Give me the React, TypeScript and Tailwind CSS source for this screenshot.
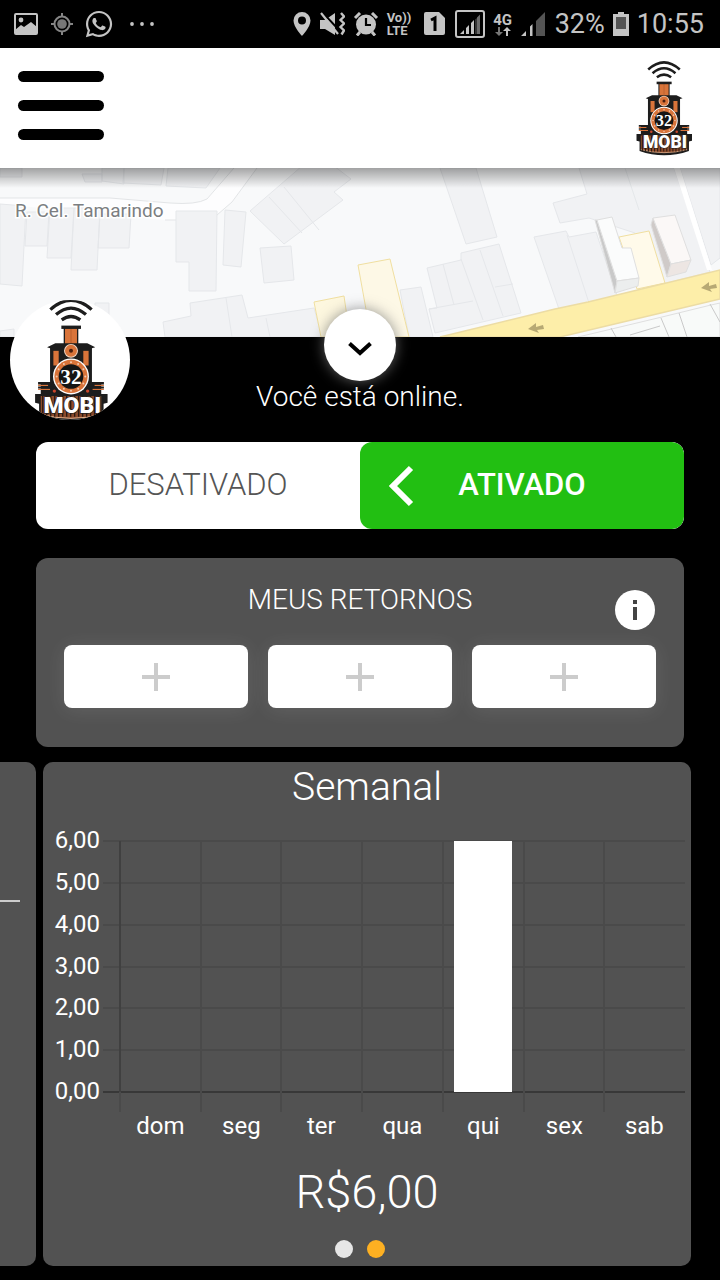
import React from "react";
import { FaWhatsapp } from "react-icons/fa";

const display = "font-['Roboto',sans-serif]";

function TrainLogo({ className }: { className: string }) {
  const slats = Array.from({ length: 15 }, (_, i) => 128 + i * 12);
  const bolts = Array.from({ length: 12 }, (_, i) => (i * Math.PI) / 6);
  return (
    <svg viewBox="100 25 226 385" className={className} role="img" aria-label="32 Mobi">
      <g fill="none" stroke="#1d1d1d" strokeWidth="10">
        <path d="M151 66 Q213 10 275 66" />
        <path d="M168 81 Q213 42 258 81" />
        <path d="M185 97 Q213 76 241 97" />
      </g>
      <rect x="191" y="120" width="44" height="52" fill="#1d1d1d" />
      <rect x="195" y="122" width="36" height="50" fill="#d9743a" />
      <path d="M213 122v50" stroke="#a95527" strokeWidth="2" />
      <rect x="184" y="114" width="59" height="10" fill="#1d1d1d" />
      <path d="M141 179 L166 167 H262 L286 179 L276 182 V284 H304 V320 H122 V284 H150 V182 Z" fill="#1d1d1d" />
      <g fill="#d9743a">
        <rect x="160" y="190" width="16" height="44" />
        <rect x="250" y="190" width="16" height="44" />
        <path d="M114 292h30v4h-30zM114 304h36v4h-36zM284 292h28v4h-28zM278 304h34v4h-34z" />
      </g>
      <path d="M114 284h42v7h-42zM114 297h42v6h-42zM272 284h40v7h-40zM272 297h40v6h-40z" fill="#1d1d1d" />
      <circle cx="213" cy="190" r="21" fill="#f6d9c6" />
      <circle cx="213" cy="190" r="18" fill="#d9743a" />
      <circle cx="213" cy="190" r="6" fill="#4a1d0d" />
      <path d="M105 320 H323 V346 L311 349 V386 Q213 420 117 386 V349 L105 346 Z" fill="#1d1d1d" />
      <path d="M122 326 H304 V381 Q213 405 122 381 Z" fill="#8b4a2b" />
      <path d="M122 381 Q213 405 304 381" fill="none" stroke="#e9b48f" strokeWidth="3" />
      {slats.map((x) => (
        <path key={x} d={`M${x} 326v62`} stroke="#2a1a12" strokeWidth="4" />
      ))}
      <circle cx="163" cy="311" r="5" fill="#c8452b" />
      <circle cx="263" cy="311" r="5" fill="#c8452b" />
      <circle cx="213" cy="267" r="54" fill="#fff" />
      <circle cx="213" cy="267" r="50" fill="#d9743a" />
      {bolts.map((a) => (
        <circle key={a} cx={213 + 43 * Math.cos(a)} cy={267 + 43 * Math.sin(a)} r="3" fill="#f3c9ae" />
      ))}
      <circle cx="213" cy="267" r="37" fill="#151515" />
      <text x="213" y="289" textAnchor="middle" fontSize="64" fill="#fff" className="font-['Liberation_Serif',serif] font-bold">
        32
      </text>
      <text
        x="217"
        y="376"
        textAnchor="middle"
        fontSize="69"
        fill="#fff"
        stroke="#1d1d1d"
        strokeWidth="4"
        paintOrder="stroke"
        className="font-['Roboto',sans-serif] font-black"
      >
        MOBI
      </text>
    </svg>
  );
}

function StatusBar() {
  return (
    <div className="flex h-12 items-center justify-between bg-black pr-4 pl-3.5 text-[#c4c4c4]">
      <div className="flex items-center gap-3">
        <svg viewBox="0 0 24 22" className="h-[22px] w-6" aria-hidden="true">
          <rect x="1" y="1" width="22" height="20" rx="1" fill="none" stroke="currentColor" strokeWidth="2" />
          <circle cx="7" cy="7" r="2.4" fill="currentColor" />
          <path d="M1 21V17L7 12L10 14L17 9L23 14V21Z" fill="currentColor" />
        </svg>
        <svg viewBox="0 0 24 24" className="size-6" fill="none" stroke="#858585" strokeWidth="2" aria-hidden="true">
          <circle cx="12" cy="12" r="7.5" />
          <circle cx="12" cy="12" r="4.8" fill="#777" stroke="none" />
          <path d="M12 1v4M12 19v4M1 12h4M19 12h4" />
        </svg>
        <FaWhatsapp className="-mx-0.5 size-[30px]" aria-hidden="true" />
        <svg viewBox="0 0 28 6" className="ml-1 h-1.5 w-7" fill="currentColor" aria-hidden="true">
          <circle cx="4" cy="3" r="1.9" />
          <circle cx="14" cy="3" r="1.9" />
          <circle cx="24" cy="3" r="1.9" />
        </svg>
      </div>
      <div className="flex items-center gap-2">
        <svg viewBox="0 0 18 24" className="h-6 w-[18px]" aria-hidden="true">
          <path fillRule="evenodd" fill="currentColor" d="M9 0a8.500 8.500 0 0 0-8.500 8.500C.5 15 9 24 9 24s8.500-9 8.500-15.500A8.500 8.500 0 0 0 9 0Zm0 4.500a4 4 0 1 1 0 8 4 4 0 0 1 0-8Z" />
        </svg>
        <svg viewBox="0 0 26 24" className="h-6 w-[26px]" aria-hidden="true">
          <path d="M1 8h5L16 1v22L6 17H1Z" fill="currentColor" />
          <path d="M3 0L21 19" stroke="#000" strokeWidth="2" />
          <path d="M2 1L19 22" stroke="currentColor" strokeWidth="2.200" />
          <path d="M22 1l3 3.500-3.500 3.500 3.500 3.500-3.500 3.500 3.500 3.500-2.500 4" fill="none" stroke="currentColor" strokeWidth="2.400" />
        </svg>
        <svg viewBox="0 0 26 24" className="h-6 w-[26px]" aria-hidden="true">
          <circle cx="13" cy="12.500" r="10" fill="currentColor" />
          <path d="M2 6L7 1M24 6L19 1M7 20l-3 3.500M19 20l3 3.500" stroke="currentColor" strokeWidth="3" />
          <path d="M13 6v7h5" fill="none" stroke="#000" strokeWidth="2.200" />
        </svg>
        <span className="flex w-[26px] flex-col font-['Roboto',sans-serif] text-[13px] leading-[13px] font-bold whitespace-nowrap">
          <span>Vo))</span>
          <span>LTE</span>
        </span>
        <svg viewBox="0 0 26 24" className="h-6 w-[26px]" aria-hidden="true">
          <path d="M3 2q0-2 2-2h13l6 6v15q0 2-2 2H5q-2 0-2-2Z" fill="currentColor" />
          <path d="M10 8l4-2v13" fill="none" stroke="#000" strokeWidth="3" />
        </svg>
        <svg viewBox="0 0 30 28" className="h-7 w-[30px]" aria-hidden="true">
          <rect x="1" y="1" width="28" height="26" rx="2" fill="none" stroke="currentColor" strokeWidth="2" />
          <g fill="currentColor">
            <path d="M5 24l4-4v4zM11 24v-6l3-3v9zM16 24v-11l3-3v14z" />
          </g>
          <path d="M20.500 24V9.500L21.500 8V24zM22 24V7.500L25 4.500V24z" fill="#6b6b6b" />
        </svg>
        <span className="flex w-5 flex-col items-center font-['Roboto',sans-serif] text-[15px] leading-[14px] font-bold">
          4G
          <svg viewBox="0 0 16 9" className="h-[9px] w-4" aria-hidden="true">
            <path d="M4 9L0 5h3V0h2v5h3Z" fill="#777" />
            <path d="M12 0l4 4h-3v5h-2V4H8Z" fill="currentColor" />
          </svg>
        </span>
        <svg viewBox="0 0 26 24" className="h-6 w-[26px]" aria-hidden="true">
          <path d="M0 24l5-5v5zM9 24V14.500l2.500-2.500V24z" fill="currentColor" />
          <path d="M15 24V9l9-9v24z" fill="#545454" />
        </svg>
        <span className="font-['Roboto',sans-serif] text-[27px] leading-9">32%</span>
        <svg viewBox="0 0 16 24" className="h-6 w-4" aria-hidden="true">
          <path d="M5 0h6v2h5v22H0V2h5Z" fill="currentColor" />
          <path d="M3 5h10v12H3Z" fill="#555" />
        </svg>
        <time className="font-['Roboto',sans-serif] text-[27px] leading-9">10:55</time>
      </div>
    </div>
  );
}

function MapView() {
  return (
    <svg
      viewBox="0 168 720 169"
      preserveAspectRatio="xMidYMid slice"
      className="block h-[169px] w-full bg-[#f8f9fa]"
      role="img"
      aria-label="Mapa"
    >
      <path d="M0 198H110L170 203Q196 205 207 199L234 168H257L232 202L217 215H176V220H165L0 204Z" fill="#fdfdfe" />
      <g fill="none" stroke="#e3e5e7" strokeWidth="1">
        <path d="M0 198H110L170 203Q196 205 207 199L234 168" />
        <path d="M165 220h11M217 215l15-13 25-34" />
      </g>
      <g fill="#f1f2f4" stroke="#e5e7ea" strokeWidth="1">
        <path d="M0 168h22v9H0zM82 174h20v8h-17zM102 168h22v16l-22-3zM124 168h40l-3 17-38-2zM168 168h52l-14 20-40-2z" />
        <path d="M0 204l26 2-4 80-22-2zM27 212h22l-2 34H25zM50 208h24l-3 50H47zM74 208h26l-3 62H71zM100 214h31l-2 34H98z" />
        <path d="M176 211h41l-1 80h-27v-29h-13zM225 210l21 2-5 55-18-2zM260 248l31-2 3 34-30 3z" />
        <path d="M250 211l67-58 34 26-17 13 9 8-59 44z" />
        <path d="M284 187l35 43M269 197l33 36" />
        <path d="M163 322l28-6-1-13 52-8 6 23 66-10 8 29H165zM226 298l6 39M266 318l4 19" />
        <path d="M0 331l14-2v8H0zM95 303h14v13H95z" />
        <path d="M440 168h36l21 69-31 7z" />
        <path d="M427 268l34-8v-7l38-9 22 69-86 20-6-24 8-1zM443 264l11 41M480 250l23 66M461 259l22 61M429 309l44-8M495 287l18-3" />
        <path d="M400 290l21-3 12 50H409z" />
        <path d="M579 168h95l36 104-59 15-16-54-46-15-29 5-7-20 34-9zM625 168l14 42" />
        <path d="M534 237l32-6 3 6 27-5 22 66-58 14zM567 235l22 68" />
        <path d="M680 168h40v90l-9 7z" />
      </g>
      <path d="M674 168h6l32 102h-5z" fill="#fff" />
      <g stroke="#f0dfa0" strokeWidth="1">
        <path d="M358 265l32-6 19 78h-38z" fill="#fdf8e6" />
        <path d="M314 302l30-6 6 41h-29z" fill="#fdf7df" />
        <path d="M619 237l30-6 16 52-28 6z" fill="#fffaea" />
      </g>
      <path d="M440 337L555 309L588 302L720 270V299L560 337Z" fill="#fdeea9" stroke="#ecdca4" strokeWidth="1.500" />
      <g stroke="#dfdfdf" strokeWidth="1">
        <path d="M595 220l20 73 2-12-20-61z" fill="#c9c9c9" />
        <path d="M597 220l15-3 10 31h9l8 30-22 3z" fill="#fbfcfc" />
        <path d="M617 281l22-3-1 8-23 7z" fill="#eceeee" />
        <path d="M653 218l18 46-4 13-16-52z" fill="#cfcac8" />
        <path d="M653 218l22-3 16 45-20 4z" fill="#fbf8f7" />
        <path d="M671 264l20-4-5 12-19 5z" fill="#ede6e3" />
        <path d="M578 337l84-20 49-12 9-2v34z" fill="#f8faf9" />
        <path d="M661 318l8 19M679 313l8 24M710 304l10 18M611 328l5 9M630 335l30-9" fill="none" stroke="#c9c9c9" />
      </g>
      <g fill="#b7a974">
        <path d="M528 329l8-6v4l7-2 1 4-7 1 2 3z" />
        <path d="M701 288l8-6v4l7-2 1 4-7 1 2 3z" />
      </g>
      <text
        x="15"
        y="217"
        fontSize="19"
        fill="#7b7e81"
        stroke="#fff"
        strokeWidth="3"
        paintOrder="stroke"
        className="font-['Roboto',sans-serif]"
      >
        R. Cel. Tamarindo
      </text>
    </svg>
  );
}

const days = ["dom", "seg", "ter", "qua", "qui", "sex", "sab"];
const values = [0, 0, 0, 0, 6, 0, 0];
const ticks = [6, 5, 4, 3, 2, 1, 0];

function WeekChart() {
  const left = 77;
  const top = 21;
  const width = 565;
  const height = 251;
  const step = width / 7;
  return (
    <svg viewBox="0 0 648 330" className="block w-full font-['Roboto',sans-serif]" role="img" aria-label="Ganhos da semana">
      {ticks.map((t, i) => {
        const y = Math.round(top + (height * i) / 6);
        return (
          <g key={t}>
            <path d={`M60 ${y}H${left + width}`} stroke={t === 0 ? "#383838" : "#4a4a4a"} strokeWidth="2" />
            <text x="57" y={y + 7} textAnchor="end" fontSize="24" fill="#fff">
              {`${t},00`}
            </text>
          </g>
        );
      })}
      {days.map((d, i) => {
        const x = Math.round(left + step * i);
        const h = (height * values[i]) / 6;
        return (
          <g key={d}>
            <path d={`M${x} ${top}V${top + height + 20}`} stroke="#4a4a4a" strokeWidth="2" />
            {i === 0 && <path d={`M${x} ${top}V${top + height}`} stroke="#404040" strokeWidth="2" />}
            {h > 0 && <rect x={x + 11} y={top + height - h} width="58" height={h} fill="#fff" />}
            <text x={x + step / 2} y="314" textAnchor="middle" fontSize="24" fill="#fff">
              {d}
            </text>
          </g>
        );
      })}
    </svg>
  );
}

export default function App() {
  return (
    <div className="min-h-screen overflow-x-hidden bg-black text-white">
      <StatusBar />
      <header className="flex h-[121px] items-center justify-between border-b border-[#999] bg-white px-[18px]">
        <button type="button" aria-label="Menu" className="mt-[-5px] flex w-[86px] flex-col gap-[18px]">
          <span className="h-[11px] rounded-full bg-black" />
          <span className="h-[11px] rounded-full bg-black" />
          <span className="h-[11px] rounded-full bg-black" />
        </button>
        <TrainLogo className="mr-2 h-[98px] w-[60px]" />
      </header>

      <main>
        <div className="relative">
          <div className="-mt-px">
            <MapView />
          </div>
          <div className="pointer-events-none absolute inset-x-0 top-0 h-5 bg-linear-to-b from-black/35 to-transparent" />
          <div className="absolute -bottom-[83px] left-2.5 flex size-[120px] items-center justify-center overflow-hidden rounded-full bg-white pl-0.5">
            <TrainLogo className="h-32 w-[76px] shrink-0" />
          </div>
          <button
            type="button"
            aria-label="Recolher mapa"
            className="absolute -bottom-11 left-1/2 flex size-[72px] -translate-x-1/2 items-center justify-center rounded-full bg-white shadow-[0_0_14px_rgba(120,120,120,0.8)]"
          >
            <svg viewBox="0 0 24 14" className="mt-2 h-3.5 w-6" fill="none" stroke="#000" strokeWidth="4" aria-hidden="true">
              <path d="M1.500 1.500L12 11L22.500 1.500" />
            </svg>
          </button>
        </div>

        <p className={`${display} pt-10 text-center text-[28px] leading-10 font-light`}>Você está online.</p>

        <div className="mx-9 mt-[25px] grid grid-cols-2 overflow-hidden rounded-xl bg-white">
          <button type="button" className={`${display} h-[87px] text-[31px] font-light text-[#555]`}>
            DESATIVADO
          </button>
          <button
            type="button"
            aria-pressed="true"
            className={`${display} relative h-[87px] rounded-xl bg-[#22bf12] text-[31px] font-medium text-white`}
          >
            <svg viewBox="0 0 26 42" className="absolute top-[23px] left-7 h-[42px] w-[26px]" fill="none" stroke="#fff" strokeWidth="6" aria-hidden="true">
              <path d="M23 3L5 21L23 39" />
            </svg>
            ATIVADO
          </button>
        </div>

        <section className="relative mx-9 mt-[29px] rounded-xl bg-[#525252] px-7 pt-[22px] pb-[39px]">
          <h2 className={`${display} text-center text-[28px] leading-10 font-light`}>MEUS RETORNOS</h2>
          <button
            type="button"
            aria-label="Informações"
            className="absolute top-8 right-[29px] flex size-10 items-center justify-center rounded-full bg-white"
          >
            <svg viewBox="0 0 4 20" className="h-5 w-1" fill="#444" aria-hidden="true">
              <path d="M0 0h4v4H0zM0 7h4v13H0z" />
            </svg>
          </button>
          <div className="mt-[25px] grid grid-cols-3 gap-5">
            {[1, 2, 3].map((n) => (
              <button
                key={n}
                type="button"
                aria-label={`Adicionar retorno ${n}`}
                className="flex h-[63px] items-center justify-center rounded-lg bg-white shadow-[0_2px_20px_rgba(255,255,255,0.1)]"
              >
                <svg viewBox="0 0 28 28" className="size-7" stroke="#ccc" strokeWidth="4" aria-hidden="true">
                  <path d="M14 0v28M0 14h28" />
                </svg>
              </button>
            ))}
          </div>
        </section>

        <div className="mt-[15px] flex gap-[7px] pr-[29px] pb-3.5">
          <div className="w-9 shrink-0 rounded-r-[10px] bg-[#525252] pt-[138px]">
            <div className="h-0.5 w-5 bg-[#ccc]" />
          </div>
          <section className="min-w-0 flex-1 rounded-[10px] bg-[#525252]">
            <h2 className={`${display} pt-0.5 text-center text-[39px] leading-[46px] font-light`}>Semanal</h2>
            <div className="mt-2.5">
              <WeekChart />
            </div>
            <p className={`${display} mt-3 text-center text-[47px] leading-[60px] font-light`}>R$6,00</p>
            <div className="mt-[18px] mb-2 mr-3.5 flex justify-center gap-3.5">
              <button type="button" aria-label="Página 1" className="size-[18px] rounded-full bg-[#e6e6e6]" />
              <button type="button" aria-label="Página 2" className="size-[18px] rounded-full bg-[#fdb022]" />
            </div>
          </section>
        </div>
      </main>
    </div>
  );
}
